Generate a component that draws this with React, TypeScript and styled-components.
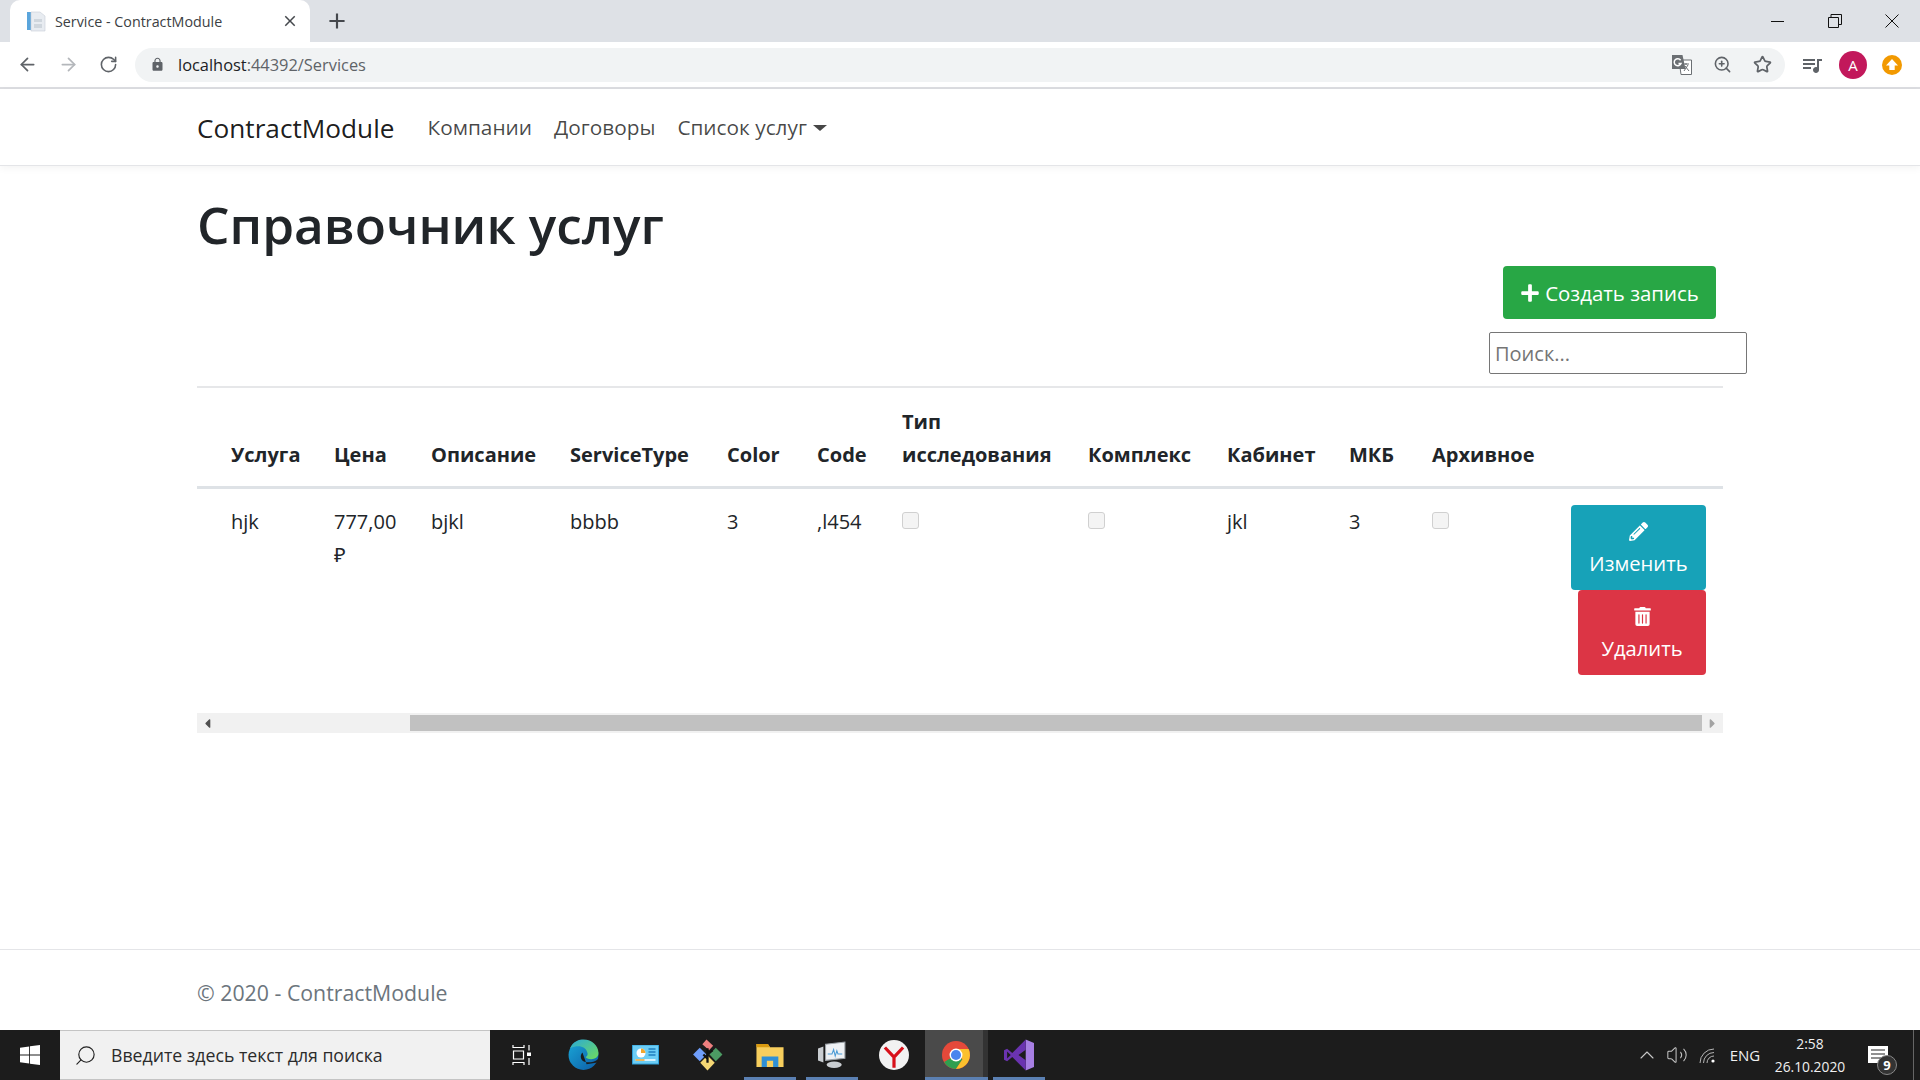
import React from 'react'
import styled, { createGlobalStyle } from 'styled-components'
import { FaPlus, FaPencilAlt, FaTrashAlt, FaCaretLeft, FaCaretRight } from 'react-icons/fa'
import { MdLock, MdQueueMusic, MdClose, MdAdd } from 'react-icons/md'
import { ArrowLeft, ArrowRight, RotateCw, ZoomIn, Star, Search, ChevronUp, Volume2 } from 'lucide-react'

const columns = [
  { title: 'Услуга', width: 120 },
  { title: 'Цена', width: 97 },
  { title: 'Описание', width: 139 },
  { title: 'ServiceType', width: 157 },
  { title: 'Color', width: 90 },
  { title: 'Code', width: 85 },
  { title: 'Тип исследования', width: 186 },
  { title: 'Комплекс', width: 139 },
  { title: 'Кабинет', width: 122 },
  { title: 'МКБ', width: 83 },
  { title: 'Архивное', width: 139 },
  { title: '', width: 169 },
]

function App() {
  return (
    <Page>
      <GlobalStyle />

      <TabStrip>
        <Tab>
          <FavIcon />
          <TabTitle>Service - ContractModule</TabTitle>
          <MdClose size={18} color="#45484d" />
        </Tab>
        <NewTab><MdAdd size={26} color="#45484d" /></NewTab>
        <WindowControls>
          <WindowButton><svg width="14" height="14" viewBox="0 0 14 14"><path d="M0 7.5h13" stroke="#111" /></svg></WindowButton>
          <WindowButton><svg width="14" height="14" viewBox="0 0 14 14"><path d="M.5 3.5h10v10H.5zM3 3.5V.5h10.500v10h-3" fill="none" stroke="#111" /></svg></WindowButton>
          <WindowButton><svg width="14" height="14" viewBox="0 0 14 14"><path d="M.5.500l13 13M13.500.500l-13 13" stroke="#111" /></svg></WindowButton>
        </WindowControls>
      </TabStrip>

      <Toolbar>
        <NavIcons>
          <ArrowLeft size={21} color="#5f6368" strokeWidth={2} />
          <ArrowRight size={21} color="#b4b7bb" strokeWidth={2} />
          <RotateCw size={19} color="#5f6368" strokeWidth={2} />
        </NavIcons>
        <AddressBar>
          <MdLock size={15} color="#5f6368" />
          <Url>localhost<UrlRest>:44392/Services</UrlRest></Url>
          <AddressIcons>
            <TranslateIcon />
            <ZoomIn size={19} color="#5f6368" strokeWidth={2} />
            <Star size={19} color="#5f6368" strokeWidth={2.200} />
          </AddressIcons>
        </AddressBar>
        <Extensions>
          <MdQueueMusic size={24} color="#5f6368" />
          <Avatar>A</Avatar>
          <UpgradeIcon />
        </Extensions>
      </Toolbar>

      <Navbar>
        <Brand>ContractModule</Brand>
        <NavLink>Компании</NavLink>
        <NavLink>Договоры</NavLink>
        <NavLink>Список услуг<Caret /></NavLink>
      </Navbar>

      <Main>
        <Heading>Справочник услуг</Heading>
        <Actions>
          <CreateButton><FaPlus size={20} /> Создать запись</CreateButton>
          <SearchInput placeholder="Поиск..." />
        </Actions>
        <Divider />

        <Table>
          <colgroup>
            {columns.map((c, i) => <col key={i} width={c.width} />)}
          </colgroup>
          <thead>
            <tr>
              {columns.map((c, i) => <th key={i}>{c.title}</th>)}
            </tr>
          </thead>
          <tbody>
            <tr>
              <td>hjk</td>
              <td>777,00 ₽</td>
              <td>bjkl</td>
              <td>bbbb</td>
              <td>3</td>
              <td>,l454</td>
              <td><Check type="checkbox" disabled /></td>
              <td><Check type="checkbox" disabled /></td>
              <td>jkl</td>
              <td>3</td>
              <td><Check type="checkbox" disabled /></td>
              <ButtonCell>
                <RowButton $color="#17a2b8" $width={135}><FaPencilAlt size={19} />Изменить</RowButton>
                <RowButton $color="#dc3545" $width={128}><FaTrashAlt size={19} />Удалить</RowButton>
              </ButtonCell>
            </tr>
          </tbody>
        </Table>

        <ScrollBar>
          <ScrollArrow><FaCaretLeft size={15} /></ScrollArrow>
          <ScrollTrack><ScrollThumb /></ScrollTrack>
          <ScrollArrow><FaCaretRight size={15} color="#a3a3a3" /></ScrollArrow>
        </ScrollBar>
      </Main>

      <Footer>© 2020 - ContractModule</Footer>

      <Taskbar>
        <StartButton>
          <svg width="20" height="20" viewBox="0 0 19 19" fill="#fff">
            <path d="M0 2.600 8.700 1.400V9H0zM9.500 1.300 19 0v9H9.500zM0 10h8.700v7.600L0 16.400zM9.500 10H19v9l-9.500-1.300z" />
          </svg>
        </StartButton>
        <TaskSearch>
          <Search size={23} color="#222" strokeWidth={1.200} style={{ transform: 'scaleX(-1)' }} />
          <span>Введите здесь текст для поиска</span>
        </TaskSearch>
        <TaskSlot>
          <svg width="19" height="20" viewBox="0 0 19 20" fill="none" stroke="#fff" strokeWidth="1.200">
            <path d="M1 0v2.500h11V0M1 20v-2.500h11V20M1.500 6h10v8h-10zM17 0v5.500M17 13v7" />
            <rect x="15" y="7.500" width="4" height="3.500" fill="#fff" stroke="none" />
          </svg>
        </TaskSlot>
        <TaskSlot><EdgeIcon /></TaskSlot>
        <TaskSlot><PanelIcon /></TaskSlot>
        <TaskSlot><SourceIcon /></TaskSlot>
        <TaskSlot $open><FolderIcon /></TaskSlot>
        <TaskSlot $open><MonitorIcon /></TaskSlot>
        <TaskSlot><YandexIcon /></TaskSlot>
        <TaskSlot $open $active><ChromeIcon /></TaskSlot>
        <TaskSlot $open><StudioIcon /></TaskSlot>
        <Tray>
          <TraySlot $width={30}><ChevronUp size={24} strokeWidth={1.100} /></TraySlot>
          <TraySlot $width={30}><Volume2 size={22} strokeWidth={1.100} /></TraySlot>
          <TraySlot $width={31}><WifiIcon /></TraySlot>
          <TraySlot $width={44}><TrayText>ENG</TrayText></TraySlot>
          <Clock><span>2:58</span><span>26.10.2020</span></Clock>
          <Notifications>
            <svg width="20" height="18" viewBox="0 0 20 18"><path d="M0 0h20v17H0z" fill="#fff" /><path d="M3 4h14M3 8h14M3 12h10" stroke="#222" strokeWidth="1.200" /></svg>
            <Badge>9</Badge>
          </Notifications>
          <ShowDesktop />
        </Tray>
      </Taskbar>
    </Page>
  )
}

function FavIcon() {
  return (
    <svg width="20" height="22" viewBox="0 0 20 22">
      <path d="M1 2h4v18H1z" fill="#5aa5dc" />
      <path d="M5 2h9l5 4v15H5z" fill="#e8ecf1" stroke="#c8cfd6" strokeWidth=".6" />
      <path d="M8 9h8v3H8zM8 14h8v4H8z" fill="#cfd6dd" />
    </svg>
  )
}

function TranslateIcon() {
  return (
    <svg width="20" height="20" viewBox="0 0 20 20">
      <path d="M7 5h12.500v14.500H9z" fill="#fff" stroke="#6b6f73" />
      <path d="M0 0h10.500l3 14H0z" fill="#6b6f73" />
      <path d="M8.600 5.200A3.500 3.500 0 1 0 9 8.500H6.500" fill="none" stroke="#fff" strokeWidth="1.500" />
      <path d="M11 9h6M14 8v2M12 16l4-6M13 11l4 5" stroke="#6b6f73" fill="none" />
    </svg>
  )
}

function UpgradeIcon() {
  return (
    <svg width="20" height="20" viewBox="0 0 20 20">
      <circle cx="10" cy="10" r="10" fill="#f29900" />
      <path d="M10 4l6 6.500h-3.300V15H7.300v-4.500H4z" fill="#fff" />
    </svg>
  )
}

function WifiIcon() {
  return (
    <svg width="17" height="16" viewBox="0 0 17 16" fill="none" stroke="#b5b5b5" strokeWidth="1">
      <path d="M1 16A14 14 0 0 1 15 2M4.500 16A10.500 10.500 0 0 1 15 5.500M8 16A7 7 0 0 1 15 9" />
      <circle cx="14" cy="14" r="1.600" fill="#fff" stroke="none" />
    </svg>
  )
}

function EdgeIcon() {
  return (
    <svg width="31" height="32" viewBox="0 0 30 31">
      <defs>
        <linearGradient id="edgeA" x1="0" y1="0" x2="1" y2="1">
          <stop offset="0" stopColor="#1aa8d8" />
          <stop offset="1" stopColor="#0c5ba5" />
        </linearGradient>
        <linearGradient id="edgeB" x1="0" y1="0" x2="1" y2="1">
          <stop offset="0" stopColor="#2aa9d8" />
          <stop offset="1" stopColor="#6fdc5c" />
        </linearGradient>
      </defs>
      <circle cx="15" cy="15.500" r="14.500" fill="url(#edgeA)" />
      <path d="M2 9C5 2 11 .5 15 .500c8 0 14.500 6 14.500 13 0 4-3.500 6-7 6-3 0-5-1-5.500-2 2-1 2.500-3 1.500-5C17 8 11 5 2 9z" fill="url(#edgeB)" />
      <path d="M14 13c-3 3-2 9 4 9.500 4 .3 8-.5 11-3l1 3-12 2z" fill="#1c1c1c" />
    </svg>
  )
}

function PanelIcon() {
  return (
    <svg width="27" height="20" viewBox="0 0 26 20">
      <rect width="26" height="19" fill="#6ccdf5" stroke="#2d9fd8" />
      <circle cx="8.500" cy="8" r="4.500" fill="#fff" />
      <path d="M8.500 8V3.500A4.500 4.500 0 0 1 13 8z" fill="#f0a72f" />
      <path d="M16 4h7M16 7h7M16 10h7" stroke="#1f7fc0" strokeWidth="1.500" />
      <path d="M3 15h20" stroke="#fff" strokeWidth="1.500" />
      <path d="M3 15h9" stroke="#f0a72f" strokeWidth="1.500" />
    </svg>
  )
}

function SourceIcon() {
  return (
    <svg width="31" height="32" viewBox="0 0 30 31">
      <path d="M1 15l6.500-6.500L14 15l-6.500 6.500z" fill="#6f9efb" />
      <path d="M10 5l4-4.500 6.500 6-4 4.500z" fill="#ee7f7f" />
      <path d="M17 15l6-6.500 6.500 6.500-6.500 6.500z" fill="#4c9b63" />
      <path d="M8 23l7-7 7 7-7 7.500z" fill="#f5d774" />
      <path d="M15 9v14M15 14l5-3M15 19l-4-4" stroke="#111" strokeWidth="2.200" fill="none" />
    </svg>
  )
}

function FolderIcon() {
  return (
    <svg width="28" height="25" viewBox="0 0 26 24">
      <path d="M0 1h11l2 3h13v19H0z" fill="#f7ce5d" />
      <path d="M0 1h11l2 3H0z" fill="#d99a10" />
      <path d="M5 23V13h16v10h-5v-6h-6v6z" fill="#2e8fd5" />
    </svg>
  )
}

function MonitorIcon() {
  return (
    <svg width="28" height="28" viewBox="0 0 26 26">
      <path d="M7 3 25 1v15L7 18z" fill="#eef1f4" stroke="#9aa0a6" />
      <path d="M9 12h4l1.500-4 1.500 6 1.500-5 1 3h4" fill="none" stroke="#4b9bd5" />
      <path d="M0 7l5-2v15l-5-2z" fill="#c9cdd1" />
      <ellipse cx="15" cy="22" rx="7" ry="3" fill="#c9cdd1" />
    </svg>
  )
}

function YandexIcon() {
  return (
    <svg width="30" height="30" viewBox="0 0 28 28">
      <circle cx="14" cy="14" r="14" fill="#f2f2f2" />
      <path d="M5.500 7 14 16l8.500-9M14 16v10" fill="none" stroke="#d8101a" strokeWidth="3" />
    </svg>
  )
}

function ChromeIcon() {
  return (
    <svg width="28" height="28" viewBox="0 0 26 26">
      <circle cx="13" cy="13" r="13" fill="#e5493a" />
      <path d="M13 13 2 19.500A13 13 0 0 0 13 26l6-9z" fill="#2f9f4f" />
      <path d="M13 7.500h11.700A13 13 0 0 1 13 26l6-9z" fill="#fbc02d" />
      <circle cx="13" cy="13" r="6" fill="#fff" />
      <circle cx="13" cy="13" r="4.700" fill="#4a85ee" />
    </svg>
  )
}

function StudioIcon() {
  return (
    <svg width="30" height="32" viewBox="0 0 29 30">
      <path d="M21 0 29 3.500v23L21 30z" fill="#a77fe3" />
      <path d="M21 0 8 13 3 9 0 10.500v9L3 21l5-4 13 13V20l-7-5 7-5z" fill="#6a33b0" />
      <path d="M3 11.500v7l3.500-3.500z" fill="#1c1c1c" />
    </svg>
  )
}

const GlobalStyle = createGlobalStyle`
  html, body {
    margin: 0;
    padding: 0;
  }
  body {
    font-family: "Open Sans", "Noto Sans", sans-serif;
    color: #212529;
    background: #fff;
  }
`

const Page = styled.div`
  width: 1920px;
  height: 1080px;
  display: flex;
  flex-direction: column;
  overflow: hidden;
`

const TabStrip = styled.div`
  height: 42px;
  flex: none;
  display: flex;
  align-items: flex-end;
  padding-left: 10px;
  background: #dee1e6;
`

const Tab = styled.div`
  width: 300px;
  height: 42px;
  box-sizing: border-box;
  display: flex;
  align-items: center;
  padding: 0 11px 0 16px;
  gap: 9px;
  background: #fff;
  border-radius: 10px 10px 0 0;
`

const TabTitle = styled.span`
  flex: 1;
  font-size: 14.300px;
  color: #3c4043;
`

const NewTab = styled.div`
  width: 54px;
  height: 42px;
  display: flex;
  align-items: center;
  justify-content: center;
`

const WindowControls = styled.div`
  margin-left: auto;
  height: 42px;
  display: flex;
  align-items: center;
`

const WindowButton = styled.div`
  width: 57px;
  display: flex;
  justify-content: center;
`

const Toolbar = styled.div`
  height: 45px;
  flex: none;
  display: flex;
  align-items: center;
  background: #fff;
  border-bottom: 2px solid #dcdde1;
`

const NavIcons = styled.div`
  width: 135px;
  box-sizing: border-box;
  display: flex;
  align-items: center;
  gap: 20px;
  padding-left: 17px;
`

const AddressBar = styled.div`
  width: 1650px;
  height: 34px;
  box-sizing: border-box;
  display: flex;
  align-items: center;
  padding: 0 13px 0 15px;
  gap: 13px;
  background: #f1f3f4;
  border-radius: 17px;
`

const Url = styled.span`
  font-size: 16.400px;
  color: #202124;
`

const UrlRest = styled.span`
  color: #5f6368;
`

const AddressIcons = styled.div`
  margin-left: auto;
  display: flex;
  align-items: center;
  gap: 21px;
`

const Extensions = styled.div`
  flex: 1;
  display: flex;
  align-items: center;
  gap: 15px;
  padding-left: 15px;
`

const Avatar = styled.div`
  width: 28px;
  height: 28px;
  display: flex;
  align-items: center;
  justify-content: center;
  border-radius: 50%;
  background: #c2185b;
  color: #fff;
  font-size: 15px;
`

const Navbar = styled.nav`
  height: 77px;
  flex: none;
  box-sizing: border-box;
  display: flex;
  align-items: center;
  padding-left: 197px;
  gap: 22px;
  border-bottom: 1px solid #e4e5e8;
  box-shadow: 0 2px 8px rgba(0, 0, 0, 0.05);
`

const Brand = styled.span`
  margin-right: 11px;
  padding-top: 2px;
  font-size: 26.200px;
  color: rgba(0, 0, 0, 0.9);
`

const NavLink = styled.a`
  font-size: 20.800px;
  color: rgba(0, 0, 0, 0.72);
`

const Caret = styled.span`
  display: inline-block;
  margin-left: 6px;
  vertical-align: 4px;
  border-top: 6px solid rgba(0, 0, 0, 0.72);
  border-left: 7px solid transparent;
  border-right: 7px solid transparent;
`

const Main = styled.main`
  flex: 1;
  width: 1526px;
  margin: 0 auto;
  display: flex;
  flex-direction: column;
`

const Heading = styled.h1`
  margin: 25px 0 0;
  font-size: 51.300px;
  font-weight: 600;
  line-height: 66px;
  color: #212529;
`

const Actions = styled.div`
  display: flex;
  flex-direction: column;
  align-items: flex-end;
  margin-top: 9px;
`

const CreateButton = styled.button`
  width: 213px;
  height: 53px;
  margin-right: 7px;
  padding: 0;
  display: flex;
  align-items: center;
  justify-content: center;
  gap: 5px;
  border: none;
  border-radius: 4px;
  background: #28a745;
  color: #fff;
  font-family: inherit;
  font-size: 20.400px;
`

const SearchInput = styled.input`
  width: 258px;
  height: 42px;
  box-sizing: border-box;
  margin: 13px -24px 0 0;
  padding: 0 5px;
  border: 1px solid #767676;
  border-radius: 2px;
  font-family: inherit;
  font-size: 20px;
  &::placeholder {
    color: #757575;
  }
`

const Divider = styled.hr`
  width: 100%;
  margin: 12px 0 0;
  border: none;
  border-top: 2px solid #e6e7e9;
`

const Table = styled.table`
  width: 1526px;
  table-layout: fixed;
  border-collapse: collapse;
  font-size: 20px;
  line-height: 33px;
  th, td {
    padding: 16px 17px;
    text-align: left;
    vertical-align: top;
  }
  th {
    padding: 17px 17px 15px;
    vertical-align: bottom;
    font-weight: 700;
    border-bottom: 3px solid #dee2e6;
  }
  th:first-child, td:first-child {
    padding-left: 34px;
  }
`

const ButtonCell = styled.td`
  && {
    padding: 16px 17px 17px 0;
  }
  display: flex;
  flex-direction: column;
  align-items: flex-end;
`

const RowButton = styled.button<{ $color: string; $width: number }>`
  width: ${p => p.$width}px;
  height: 85px;
  padding: 17px 0 0;
  display: flex;
  flex-direction: column;
  align-items: center;
  justify-content: flex-start;
  gap: 8px;
  border: none;
  border-radius: 4px;
  background: ${p => p.$color};
  color: #fff;
  font-family: inherit;
  font-size: 20.200px;
`

const Check = styled.input`
  appearance: none;
  width: 17px;
  height: 17px;
  margin: 0;
  vertical-align: 0;
  background: #f4f4f4;
  border: 1px solid #d0d0d0;
  border-radius: 3px;
`

const ScrollBar = styled.div`
  height: 20px;
  margin-top: 21px;
  display: flex;
  align-items: center;
  background: #f1f1f1;
`

const ScrollArrow = styled.div`
  width: 21px;
  display: flex;
  justify-content: center;
  color: #505050;
`

const ScrollTrack = styled.div`
  flex: 1;
  padding-left: 192px;
`

const ScrollThumb = styled.div`
  height: 16px;
  background: #c1c1c1;
`

const Footer = styled.footer`
  height: 81px;
  flex: none;
  box-sizing: border-box;
  padding: 26px 0 0 197px;
  border-top: 1px solid #e4e5e8;
  font-size: 21.300px;
  line-height: 33px;
  color: #6c757d;
`

const Taskbar = styled.div`
  height: 50px;
  flex: none;
  display: flex;
  background: #1c1c1c;
  color: #fff;
`

const StartButton = styled.div`
  width: 60px;
  flex: none;
  display: flex;
  align-items: center;
  justify-content: center;
`

const TaskSearch = styled.div`
  width: 430px;
  flex: none;
  box-sizing: border-box;
  display: flex;
  align-items: center;
  gap: 14px;
  padding-left: 14px;
  background: #f1f1f1;
  border: 1px solid #c4c4c4;
  border-width: 1px 0;
  color: #2b2b2b;
  font-size: 17.700px;
`

const TaskSlot = styled.div<{ $open?: boolean; $active?: boolean }>`
  position: relative;
  width: 62.200px;
  flex: none;
  display: flex;
  align-items: center;
  justify-content: center;
  background: ${p => (p.$active ? 'linear-gradient(to right, #4a4a4a 92%, #333 92%)' : 'transparent')};
  &::after {
    content: '';
    display: ${p => (p.$open ? 'block' : 'none')};
    position: absolute;
    left: ${p => (p.$active ? 0 : 5)}px;
    right: ${p => (p.$active ? 0 : 5)}px;
    bottom: 0;
    height: 3px;
    background: #5b80b2;
  }
`

const Tray = styled.div`
  margin-left: auto;
  display: flex;
  align-items: center;
  color: #c8c8c8;
`

const TraySlot = styled.div<{ $width: number }>`
  width: ${p => p.$width}px;
  display: flex;
  justify-content: center;
`

const TrayText = styled.span`
  font-size: 15px;
  color: #f0f0f0;
`

const Clock = styled.div`
  width: 86px;
  display: flex;
  flex-direction: column;
  align-items: center;
  font-size: 13.800px;
  line-height: 23px;
  color: #f0f0f0;
`

const Notifications = styled.div`
  position: relative;
  width: 60px;
  height: 50px;
  display: flex;
  align-items: center;
  padding-left: 15px;
  box-sizing: border-box;
`

const Badge = styled.span`
  position: absolute;
  left: 24px;
  top: 25px;
  width: 20px;
  height: 20px;
  box-sizing: border-box;
  display: flex;
  align-items: center;
  justify-content: center;
  border-radius: 50%;
  border: 1px solid #888;
  background: #333;
  color: #fff;
  font-size: 13px;
  font-weight: 700;
`

const ShowDesktop = styled.div`
  width: 6px;
  height: 50px;
  border-left: 1px solid #666;
`

export default App
